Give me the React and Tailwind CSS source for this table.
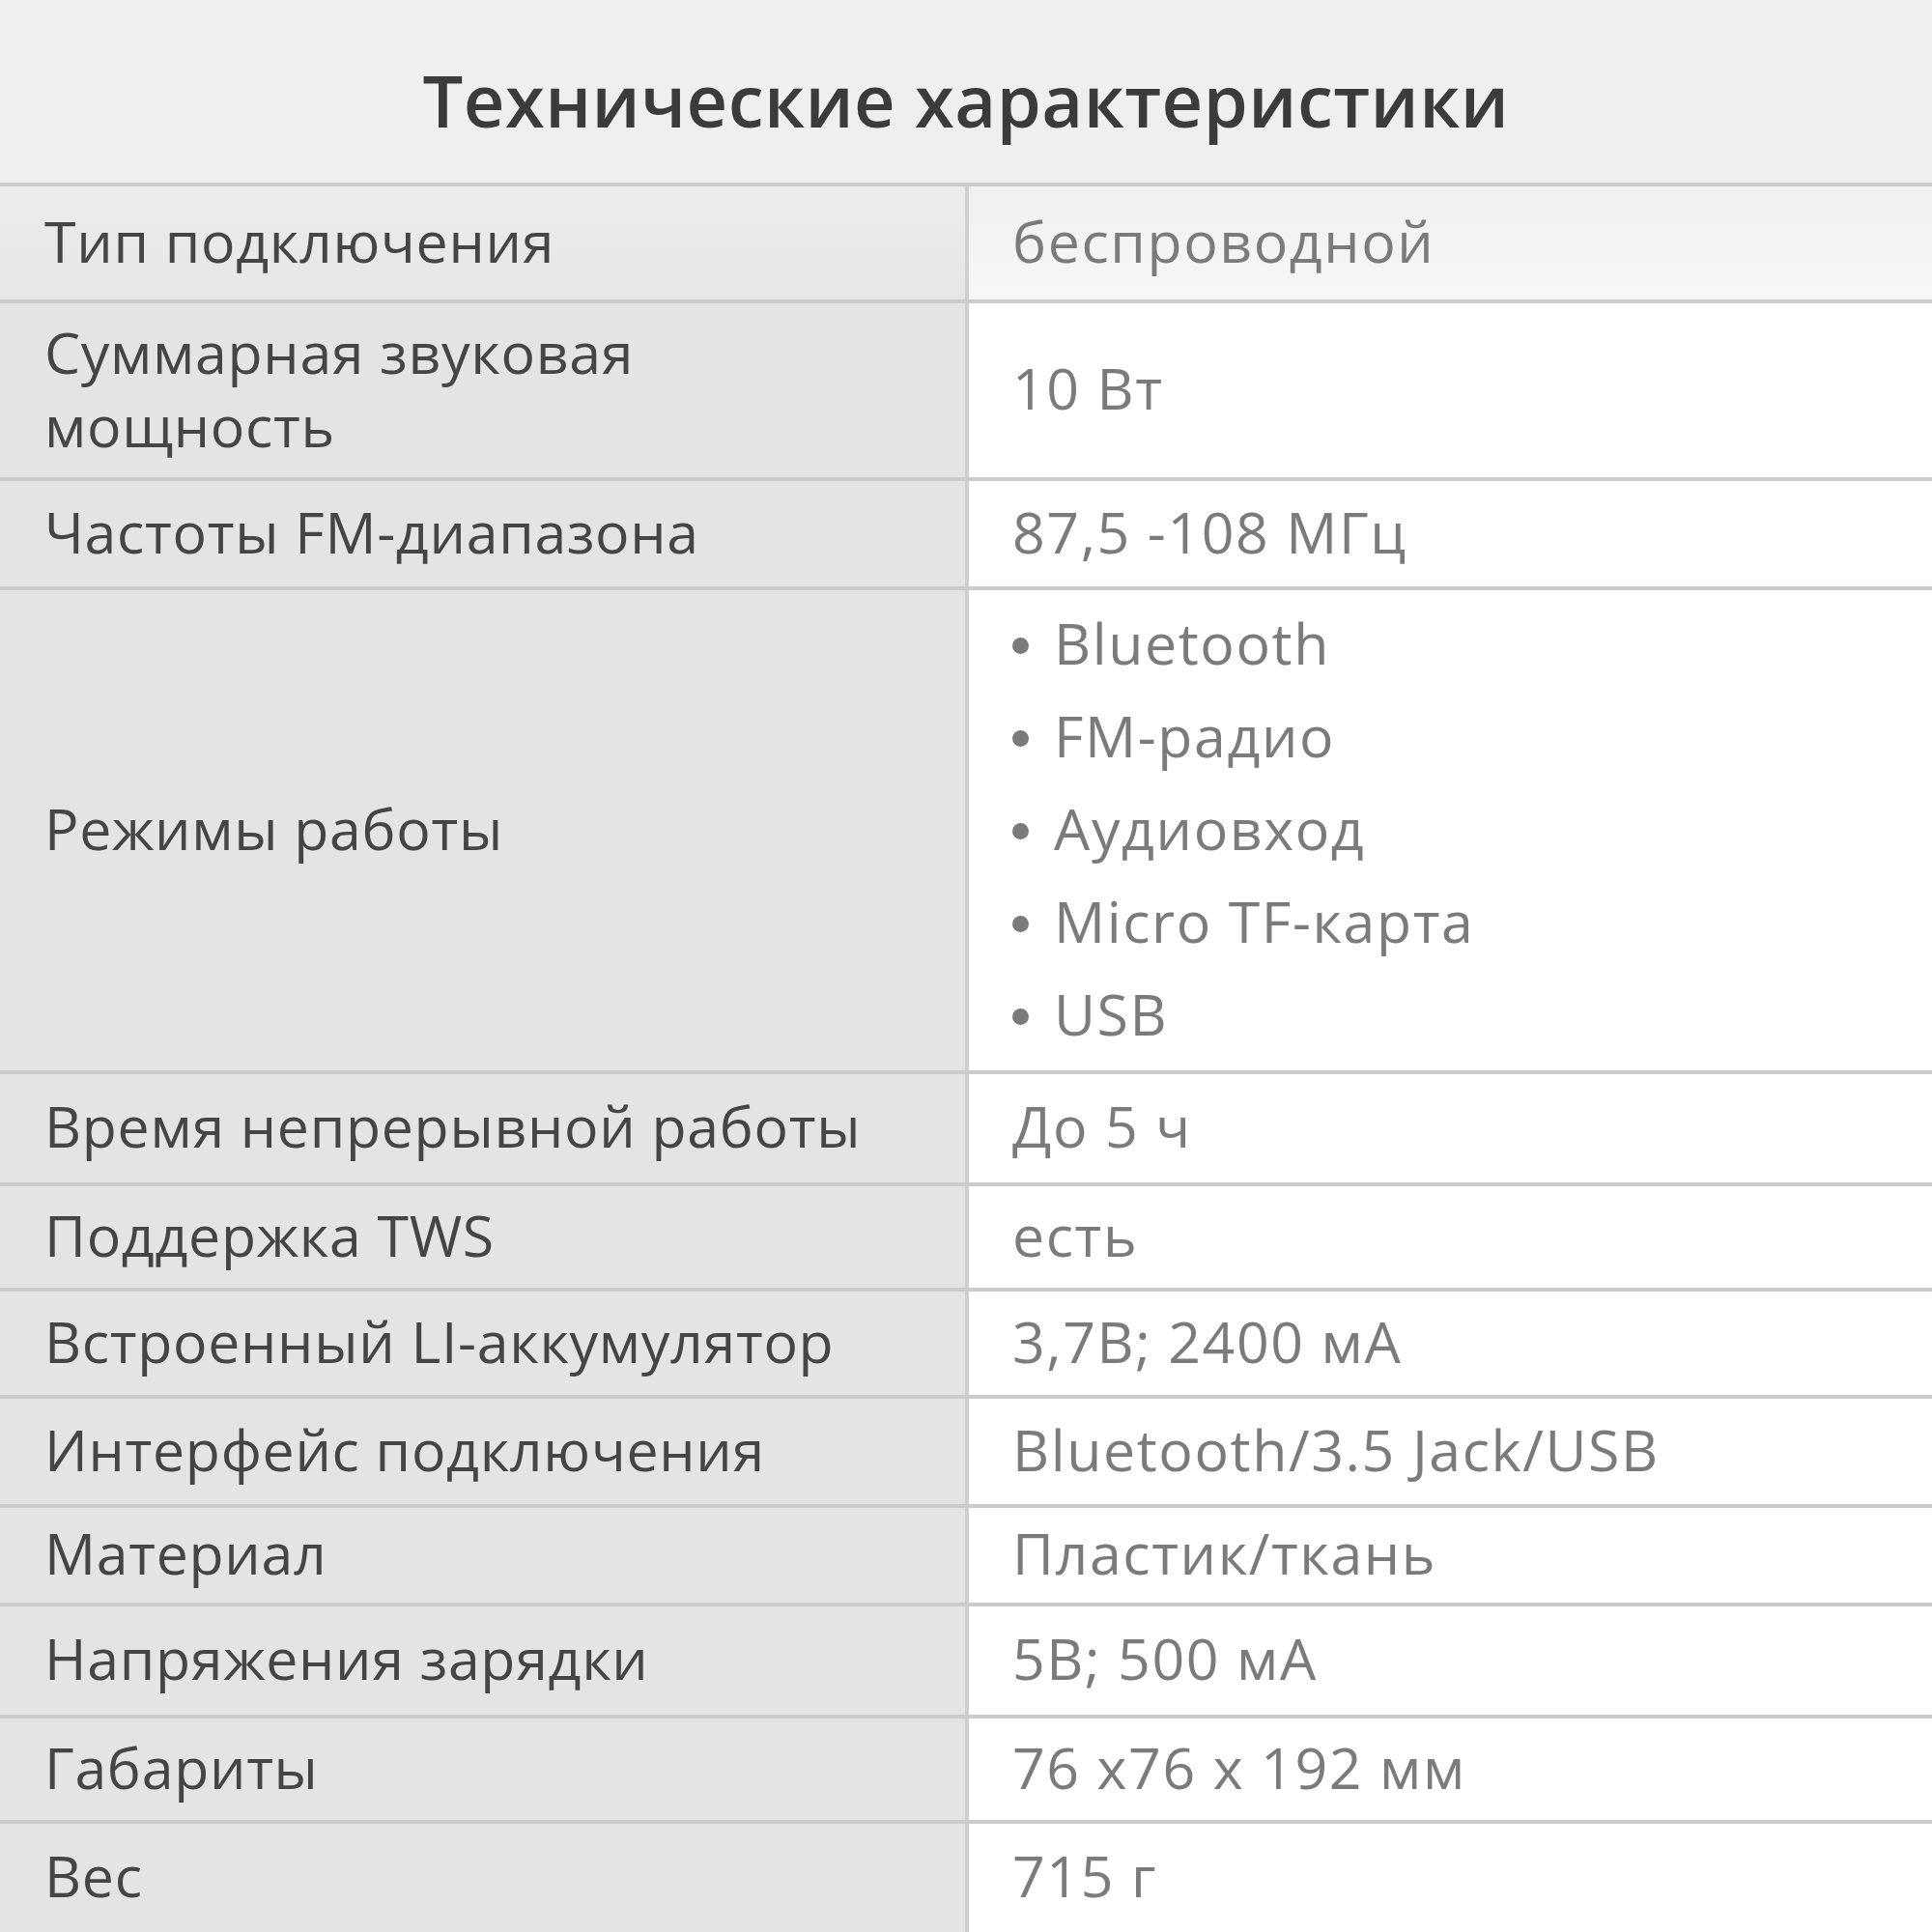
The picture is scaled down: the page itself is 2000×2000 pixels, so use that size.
const rows = [
  { label: 'Тип подключения', value: 'беспроводной', h: 'h-[121px]' },
  { label: ['Суммарная звуковая', 'мощность'], value: '10 Вт', h: 'h-[184px]' },
  { label: 'Частоты FM-диапазона', value: '87,5 -108 МГц', h: 'h-[113px]' },
  { label: 'Режимы работы', list: ['Bluetooth', 'FM-радио', 'Аудиовход', 'Micro TF-карта', 'USB'], h: 'h-[501px]' },
  { label: 'Время непрерывной работы', value: 'До 5 ч', h: 'h-[116px]' },
  { label: 'Поддержка TWS', value: 'есть', h: 'h-[109px]' },
  { label: 'Встроенный LI-аккумулятор', value: '3,7В; 2400 мА', h: 'h-[111px]' },
  { label: 'Интерфейс подключения', value: 'Bluetooth/3.5 Jack/USB', h: 'h-[113px]' },
  { label: 'Материал', value: 'Пластик/ткань', h: 'h-[102px]' },
  { label: 'Напряжения зарядки', value: '5В; 500 мА', h: 'h-[116px]' },
  { label: 'Габариты', value: '76 х76 х 192 мм', h: 'h-[109px]' },
  { label: 'Вес', value: '715 г', h: 'h-[116px]' },
];

function Row({ row, first }) {
  const leftBg = first ? 'bg-gradient-to-b from-[#ececec] to-[#e6e6e6]' : 'bg-[#e4e4e4]';
  const rightBg = first
    ? 'bg-gradient-to-b from-[#f0f0f0] to-[#f7f7f7]'
    : 'bg-white';
  return (
    <div className={`flex border-t-4 border-[#cbcbcb] ${row.h}`}>
      <div className={`w-[1003px] shrink-0 flex items-center pl-[46px] pb-[5px] border-r-4 border-[#cfcfcf] ${leftBg}`}>
        {Array.isArray(row.label) ? (
          <div className="leading-[76px]">
            {row.label.map(l => <div key={l}>{l}</div>)}
          </div>
        ) : (
          <span>{row.label}</span>
        )}
      </div>
      <div className={`flex-1 flex items-center pl-[45px] pb-[5px] text-[#7b7b7b] font-normal tracking-[1.6px] ${rightBg}`}>
        {row.list ? (
          <ul className="leading-[96px]">
            {row.list.map(item => (
              <li key={item} className="flex items-center">
                <span className="w-[17px] h-[17px] rounded-full bg-[#7b7b7b] mr-[26px] mt-[6px]" />
                {item}
              </li>
            ))}
          </ul>
        ) : (
          <span>{row.value}</span>
        )}
      </div>
    </div>
  );
}

export default function App() {
  return (
    <div className="w-[2000px] h-[2000px] overflow-hidden bg-[#efefef] text-[#454545] font-medium text-[59px] tracking-[0.7px] font-['Open_Sans',sans-serif]">
      <div className="h-[189px] flex items-center justify-center pt-[18px] bg-[#efefef]">
        <h1 className="text-[74px] font-semibold text-[#3b3b3b] tracking-[0.5px]">Технические характеристики</h1>
      </div>
      {rows.map((row, i) => (
        <Row key={i} row={row} first={i === 0} />
      ))}
    </div>
  );
}
